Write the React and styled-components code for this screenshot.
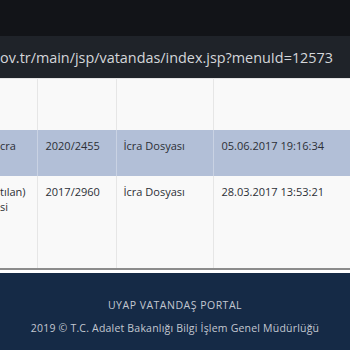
import React from "react";
import styled, { createGlobalStyle } from "styled-components";

const Global = createGlobalStyle`
  html, body { margin: 0; padding: 0; background: #f9f9f9; }
  body { font-family: "Open Sans", "Noto Sans", sans-serif; }
  #root { width: 350px; height: 350px; overflow: hidden; }
`;

const Page = styled.div`
  width: 350px;
  height: 350px;
  display: flex;
  flex-direction: column;
  overflow: hidden;
`;

const TopBar = styled.div`
  height: 36px;
  background: #121418;
  flex: none;
`;

const UrlBar = styled.div`
  height: 42px;
  background: #1f2329;
  color: #d4d6da;
  font-size: 14.4px;
  display: flex;
  align-items: center;
  white-space: nowrap;
  padding-left: 0;
  flex: none;
  overflow: hidden;
`;

const Table = styled.table`
  width: 350px;
  border-collapse: collapse;
  table-layout: fixed;
  flex: none;
  background: #f9f9f9;
  border-top: 1px solid #e4e4e4;
  border-bottom: 2px solid #8c8c8c;
  font-size: 11px;
  color: #2c2f36;
`;

const Row = styled.tr`
  background: ${(p) => (p.$active ? "#b2bfd7" : "#f9f9f9")};
  height: ${(p) => p.$h}px;
`;

const Cell = styled.td`
  border-left: 1px solid ${(p) => (p.$active ? "#c9d2e3" : "#e6e6e6")};
  vertical-align: top;
  padding: 8px 0 0 ${(p) => p.$pl ?? 8}px;
  line-height: 15px;
  overflow: hidden;
  white-space: nowrap;
  &:first-child { border-left: none; }
`;

const Spacer = styled.div`
  height: 3px;
  background: #ffffff;
  flex: none;
`;

const Footer = styled.footer`
  flex: 1;
  background: #152a46;
  color: #c3c8d1;
  display: flex;
  flex-direction: column;
  align-items: center;
  padding-top: 25px;
  gap: 9px;
  font-size: 10.5px;
`;

const FooterLine = styled.div`
  line-height: 14px;
  white-space: nowrap;
  letter-spacing: ${(p) => p.$ls ?? 0}px;
`;

export default function App() {
  return (
    <Page>
      <Global />
      <TopBar />
      <UrlBar>ov.tr/main/jsp/vatandas/index.jsp?menuId=12573</UrlBar>
      <Table>
        <colgroup>
          <col style={{ width: 37 }} />
          <col style={{ width: 79 }} />
          <col style={{ width: 97 }} />
          <col style={{ width: 137 }} />
        </colgroup>
        <tbody>
          <Row $h={51}>
            <Cell $pl={0} />
            <Cell />
            <Cell />
            <Cell />
          </Row>
          <Row $active $h={46}>
            <Cell $active $pl={0}>cra</Cell>
            <Cell $active>2020/2455</Cell>
            <Cell $active $pl={7}>İcra Dosyası</Cell>
            <Cell $active>05.06.2017 19:16:34</Cell>
          </Row>
          <Row $h={93}>
            <Cell $pl={0}>tılan)<br />si</Cell>
            <Cell>2017/2960</Cell>
            <Cell $pl={7}>İcra Dosyası</Cell>
            <Cell>28.03.2017 13:53:21</Cell>
          </Row>
        </tbody>
      </Table>
      <Spacer />
      <Footer>
        <FooterLine $ls={0.5}>UYAP VATANDAŞ PORTAL</FooterLine>
        <FooterLine $ls={0.2}>2019 © T.C. Adalet Bakanlığı Bilgi İşlem Genel Müdürlüğü</FooterLine>
      </Footer>
    </Page>
  );
}
